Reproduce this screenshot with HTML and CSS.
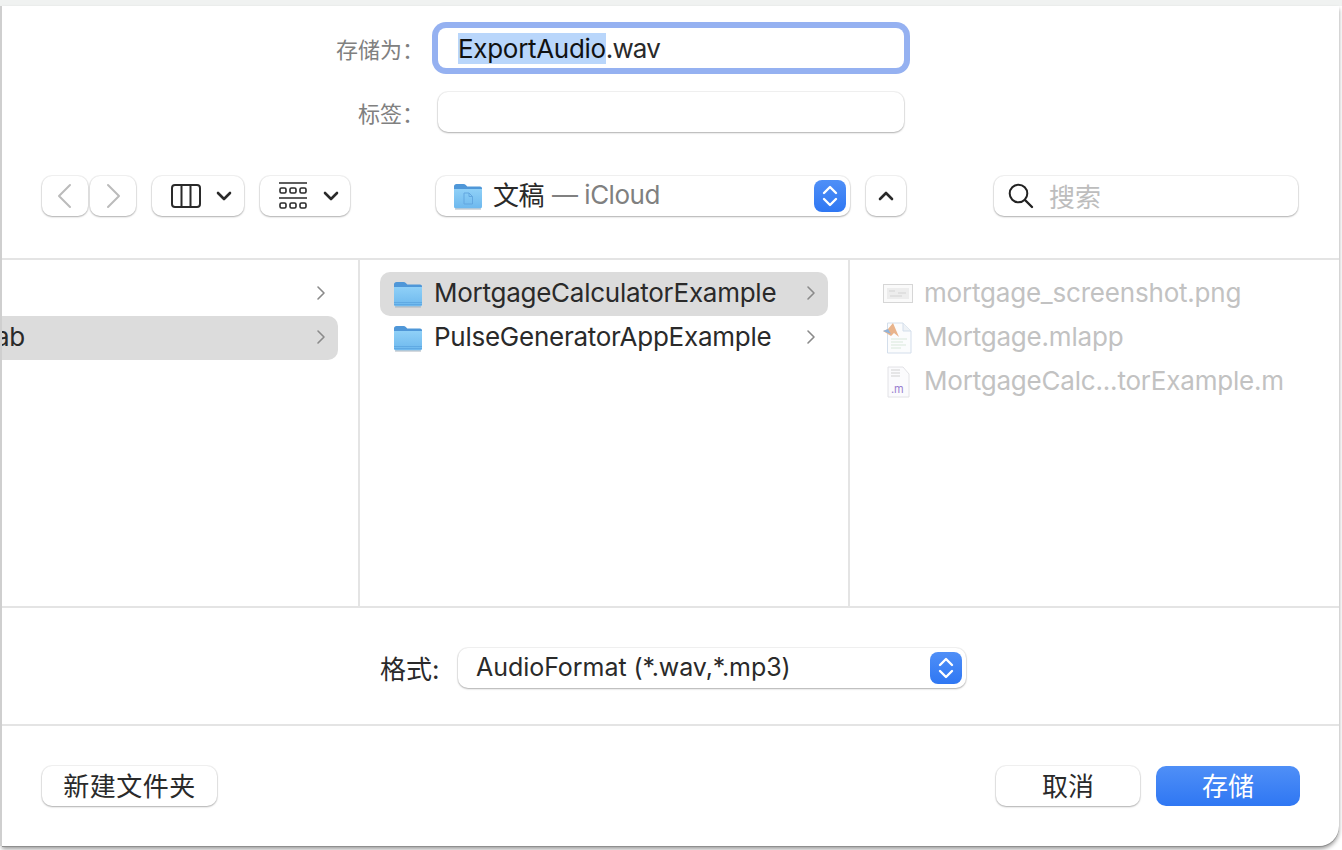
FILE: index.html
```html
<!DOCTYPE html>
<html lang="zh-CN">
<head>
    <meta charset="UTF-8">
    <title>存储为</title>
    <link rel="stylesheet" href="styles.css">
</head>
<body>
    <svg class="defs" width="0" height="0">
        <defs>
            <linearGradient id="folderBody" x1="0" y1="0" x2="0" y2="1">
                <stop offset="0" stop-color="#8fd0f7"/>
                <stop offset="1" stop-color="#6db8ee"/>
            </linearGradient>
            <symbol id="folder" viewBox="0 0 30 28">
                <path d="M1 4.500C1 3 2 2 3.500 2h7c1 0 1.700.4 2.300 1l1.500 1.500H27c1.200 0 2 .8 2 2V10H1z" fill="#4f97d8"/>
                <path d="M1 7h28v17.500c0 1.200-.8 2-2 2H3c-1.200 0-2-.8-2-2z" fill="url(#folderBody)"/>
                <path d="M1 22.500h28M1 24.500h28" stroke="#5aa5df" stroke-width=".8"/>
                <path d="M2 27h26" stroke="#a9b4bd" stroke-width="1"/>
            </symbol>
            <symbol id="stepper" viewBox="0 0 32 32">
                <path d="M10 13l6-6 6 6M10 19l6 6 6-6" fill="none" stroke="#fff" stroke-width="2.400" stroke-linecap="round" stroke-linejoin="round"/>
            </symbol>
            <symbol id="chev" viewBox="0 0 10 16">
                <path d="M2 2l6 6-6 6" fill="none" stroke="#8a8a8a" stroke-width="1.600" stroke-linecap="round" stroke-linejoin="round"/>
            </symbol>
        </defs>
    </svg>

    <div class="dialog">
        <section class="top">
            <div class="form-row">
                <label class="form-label">存储为：</label>
                <div class="name-ring">
                    <div class="name-field"><span class="sel">ExportAudio</span><span class="ext">.wav</span></div>
                </div>
            </div>
            <div class="form-row tag-row">
                <label class="form-label">标签：</label>
                <div class="tag-field"></div>
            </div>

            <div class="toolbar">
                <button class="btn nav-btn"><svg width="18" height="28" viewBox="0 0 18 28"><path d="M14 3L3 14l11 11" fill="none" stroke="#bbb" stroke-width="2" stroke-linecap="round" stroke-linejoin="round"/></svg></button>
                <button class="btn nav-btn nav-next"><svg width="18" height="28" viewBox="0 0 18 28"><path d="M4 3l11 11L4 25" fill="none" stroke="#bbb" stroke-width="2" stroke-linecap="round" stroke-linejoin="round"/></svg></button>
                <button class="btn view-btn view-cols">
                    <svg width="30" height="24" viewBox="0 0 30 24"><rect x="1" y="1" width="28" height="22" rx="3" fill="none" stroke="#2a2a2a" stroke-width="2"/><path d="M10.500 1v22M19.500 1v22" stroke="#2a2a2a" stroke-width="2"/></svg>
                    <svg class="caret" width="16" height="10" viewBox="0 0 16 10"><path d="M2 2l6 6 6-6" fill="none" stroke="#2a2a2a" stroke-width="2.600" stroke-linecap="round" stroke-linejoin="round"/></svg>
                </button>
                <button class="btn view-btn view-grid">
                    <svg width="28" height="28" viewBox="0 0 28 28"><path d="M0 1h28M0 16h28" stroke="#2a2a2a" stroke-width="1.600"/><g fill="none" stroke="#2a2a2a" stroke-width="1.600"><rect x="1" y="6" width="6" height="5" rx="1.500"/><rect x="11" y="6" width="6" height="5" rx="1.500"/><rect x="21" y="6" width="6" height="5" rx="1.500"/><rect x="1" y="21" width="6" height="5" rx="1.500"/><rect x="11" y="21" width="6" height="5" rx="1.500"/><rect x="21" y="21" width="6" height="5" rx="1.500"/></g></svg>
                    <svg class="caret" width="16" height="10" viewBox="0 0 16 10"><path d="M2 2l6 6 6-6" fill="none" stroke="#2a2a2a" stroke-width="2.600" stroke-linecap="round" stroke-linejoin="round"/></svg>
                </button>
                <div class="btn path-popup">
                    <svg class="path-folder" width="30" height="28" viewBox="0 0 30 28"><path d="M1 4.500C1 3 2 2 3.500 2h7c1 0 1.700.4 2.300 1l1.500 1.500H27c1.200 0 2 .8 2 2V10H1z" fill="#4f97d8"/><path d="M1 7h28v17.500c0 1.200-.8 2-2 2H3c-1.200 0-2-.8-2-2z" fill="url(#folderBody)"/><path d="M11 11h5l3.500 3.500V22H11z M16 11v3.500h3.500" fill="none" stroke="#62a7e0" stroke-width="1"/><path d="M2 27h26" stroke="#a9b4bd"/></svg>
                    <span class="path-name">文稿</span>
                    <span class="path-loc">— iCloud</span>
                    <svg class="stepper" width="32" height="32"><use href="#stepper"/></svg>
                </div>
                <button class="btn up-btn"><svg width="16" height="10" viewBox="0 0 16 10"><path d="M2 8l6-6 6 6" fill="none" stroke="#2a2a2a" stroke-width="2.600" stroke-linecap="round" stroke-linejoin="round"/></svg></button>
                <div class="btn search">
                    <svg width="26" height="26" viewBox="0 0 26 26"><circle cx="10.500" cy="10.500" r="8.800" fill="none" stroke="#222" stroke-width="2"/><path d="M17 17l7 7" stroke="#222" stroke-width="2.400" stroke-linecap="round"/></svg>
                    <span>搜索</span>
                </div>
            </div>
        </section>

        <section class="browser">
            <div class="col col-first">
                <div class="row"><span></span><svg class="chev" width="10" height="16"><use href="#chev"/></svg></div>
                <div class="row active"><span class="clipped">ab</span><svg class="chev" width="10" height="16"><use href="#chev"/></svg></div>
            </div>
            <div class="col col-mid">
                <div class="row active">
                    <svg class="ficon" width="30" height="28"><use href="#folder"/></svg>
                    <span>MortgageCalculatorExample</span>
                    <svg class="chev" width="10" height="16"><use href="#chev"/></svg>
                </div>
                <div class="row">
                    <svg class="ficon" width="30" height="28"><use href="#folder"/></svg>
                    <span>PulseGeneratorAppExample</span>
                    <svg class="chev" width="10" height="16"><use href="#chev"/></svg>
                </div>
            </div>
            <div class="col col-files">
                <div class="row">
                    <svg class="ficon" width="30" height="20" viewBox="0 0 30 20"><rect x=".5" y=".5" width="29" height="18" fill="#fafafa" stroke="#d6d6d6"/><rect x="4" y="4" width="22" height="11" fill="#ededed"/><path d="M6 7h6M15 9h8M7 12h12" stroke="#dcdcdc" stroke-width="1.500"/></svg>
                    <span>mortgage_screenshot.png</span>
                </div>
                <div class="row">
                    <svg class="ficon" width="30" height="32" viewBox="0 0 30 32"><path d="M4.500 1H20l8 8v22H4.500z" fill="#fbfcfd" stroke="#d3deeb"/><path d="M20 1v8h8" fill="#eef2f6" stroke="#d3deeb"/><path d="M8 17h16M8 20h12M8 23h15M8 26h10" stroke="#d9e8dc" stroke-width="1.200"/><path d="M0 9l5-2 5-6 6 14-5-4-3 3z" fill="#e9b48c"/><path d="M0 9l5-2 3 5z" fill="#8fb4dc"/></svg>
                    <span>Mortgage.mlapp</span>
                </div>
                <div class="row">
                    <svg class="ficon" width="30" height="32" viewBox="0 0 30 32"><path d="M5 1h15l6 7v23H5z" fill="#fbfbfd" stroke="#e2e2e6"/><path d="M8 4h9M8 7h9M8 10h9" stroke="#e0e0e0" stroke-width="1.500"/><text x="8" y="27" class="m-badge">.m</text></svg>
                    <span>MortgageCalc...torExample.m</span>
                </div>
            </div>
        </section>

        <section class="format">
            <label class="format-label">格式:</label>
            <div class="btn format-popup">
                <span>AudioFormat (*.wav,*.mp3)</span>
                <svg class="stepper" width="32" height="32"><use href="#stepper"/></svg>
            </div>
        </section>

        <footer class="actions">
            <button class="btn text-btn new-folder">新建文件夹</button>
            <div class="actions-right">
                <button class="btn text-btn cancel">取消</button>
                <button class="btn text-btn save">存储</button>
            </div>
        </footer>
    </div>
</body>
</html>
```

FILE: styles.css
```css
* {
    box-sizing: border-box;
}

html, body {
    margin: 0;
    height: 100%;
}

body {
    width: 1342px;
    height: 850px;
    overflow: hidden;
    padding: 6px 3px 4px 2px;
    background: linear-gradient(#f0f2f1 6px, #ffffff 6px);
    font-family: Inter, "Noto Sans CJK SC", sans-serif;
    color: #2a2a2a;
    position: relative;
}

.defs {
    position: absolute;
}

.dialog {
    height: 840px;
    background: #fff;
    border-bottom-right-radius: 20px;
    box-shadow: -2px 0 0 #cfcfcf, 0 1px 0 #8f8f8f, 0 3px 4px rgba(0, 0, 0, 0.4);
    display: flex;
    flex-direction: column;
}

.btn {
    background: #fff;
    border: none;
    border-radius: 10px;
    box-shadow: 0 0 0 1px rgba(0, 0, 0, 0.05), 0 1px 2px rgba(0, 0, 0, 0.28);
    font-family: inherit;
    color: inherit;
    padding: 0;
}

/* name + tags */
.top {
    height: 252px;
    padding-top: 16px;
}

.form-row {
    display: flex;
    align-items: center;
    height: 52px;
}

.tag-row {
    margin-top: 18px;
    height: 40px;
}

.form-label {
    width: 422px;
    flex: none;
    text-align: right;
    font-size: 22px;
    color: #808080;
}

.name-ring {
    margin-left: 8px;
    width: 478px;
    height: 52px;
    padding: 6px;
    background: #95b1f1;
    border-radius: 14px;
}

.name-field {
    height: 40px;
    background: #fff;
    border-radius: 8px;
    padding-left: 20px;
    font-size: 26px;
    line-height: 42px;
}

.sel {
    background: #b9d6fb;
    color: #111;
    letter-spacing: -0.3px;
}

.ext {
    letter-spacing: -0.9px;
}

.tag-field {
    margin-left: 14px;
    width: 466px;
    height: 40px;
    border-radius: 10px;
    background: #fff;
    box-shadow: 0 0 0 1px rgba(0, 0, 0, 0.05), 0 1px 2px rgba(0, 0, 0, 0.28);
}

/* toolbar */
.toolbar {
    display: flex;
    align-items: center;
    height: 40px;
    margin-top: 44px;
    padding-left: 40px;
}

.toolbar .btn {
    height: 40px;
    display: flex;
    align-items: center;
    justify-content: center;
}

.nav-btn {
    width: 46px;
}

.nav-next {
    margin-left: 2px;
}

.toolbar .view-btn {
    justify-content: flex-start;
    padding-left: 19px;
}

.view-cols {
    width: 92px;
    margin-left: 16px;
    gap: 15px;
}

.view-grid {
    width: 90px;
    margin-left: 16px;
    gap: 16px;
}

.toolbar .path-popup {
    width: 414px;
    margin-left: 86px;
    padding-left: 17px;
    justify-content: flex-start;
    font-size: 26px;
    letter-spacing: -0.5px;
}

.path-name {
    margin-left: 10px;
    padding-bottom: 5px;
    color: #2a2a2a;
}

.path-loc {
    margin-left: 8px;
    padding-bottom: 4px;
    color: #808080;
}

.stepper {
    margin-left: auto;
    margin-right: 4px;
    background: linear-gradient(#4f8ff7, #2f77f3);
    border-radius: 8px;
}

.up-btn {
    width: 40px;
    margin-left: 16px;
}

.toolbar .search {
    width: 304px;
    margin-left: 88px;
    justify-content: flex-start;
    padding-left: 14px;
    gap: 15px;
    font-size: 26px;
    color: #bdbdbd;
}

.search span {
    padding-bottom: 2px;
}

/* column browser */
.browser {
    height: 350px;
    display: flex;
    border-top: 2px solid #e4e4e4;
    border-bottom: 2px solid #e4e4e4;
}

.col {
    padding-top: 12px;
    height: 100%;
}

.col-first {
    width: 358px;
    padding-right: 20px;
    border-right: 2px solid #e4e4e4;
    overflow: hidden;
}

.col-mid {
    width: 490px;
    padding: 12px 20px 0 20px;
    border-right: 2px solid #e4e4e4;
}

.col-files {
    flex: 1;
    padding-left: 33px;
    color: #c2c2c2;
}

.row {
    height: 44px;
    display: flex;
    align-items: center;
    font-size: 26px;
    letter-spacing: -0.26px;
    white-space: nowrap;
}

.row span {
    padding-bottom: 4px;
}

.col-files .row {
    letter-spacing: -0.2px;
}

.row.active {
    background: #dcdcdc;
    border-radius: 10px;
}

.col-first .row.active {
    border-radius: 0 10px 10px 0;
}

.col-first .row {
    justify-content: space-between;
    padding-right: 12px;
}

.clipped {
    margin-left: -7px;
}

.col-mid .row {
    padding-left: 13px;
    padding-right: 12px;
}

.ficon {
    flex: none;
    margin-right: 11px;
}

.chev {
    margin-left: auto;
    margin-bottom: 2px;
}

.m-badge {
    font-family: Inter, sans-serif;
    font-size: 11px;
    fill: #9a7fd0;
}

/* format row */
.format {
    height: 118px;
    border-bottom: 2px solid #e4e4e4;
    display: flex;
    align-items: center;
    padding: 4px 0 0 378px;
}

.format-label {
    font-size: 26px;
    width: 78px;
    padding-bottom: 2px;
}

.format-popup {
    width: 508px;
    height: 40px;
    padding-left: 18px;
    display: flex;
    align-items: center;
    font-size: 25px;
    letter-spacing: -0.05px;
}

.format-popup span {
    padding-bottom: 2px;
}

/* bottom buttons */
.actions {
    flex: 1;
    display: flex;
    justify-content: space-between;
    align-items: flex-start;
    padding: 40px 39px 0 40px;
}

.actions-right {
    display: flex;
    gap: 16px;
}

.text-btn {
    height: 40px;
    font-size: 26px;
    text-align: center;
    padding-bottom: 5px;
}

.new-folder {
    width: 175px;
    letter-spacing: 0.5px;
}

.cancel {
    width: 144px;
}

.save {
    width: 144px;
    color: #fff;
    background: linear-gradient(#4f8ff7, #2f77f3);
    box-shadow: none;
}
```
